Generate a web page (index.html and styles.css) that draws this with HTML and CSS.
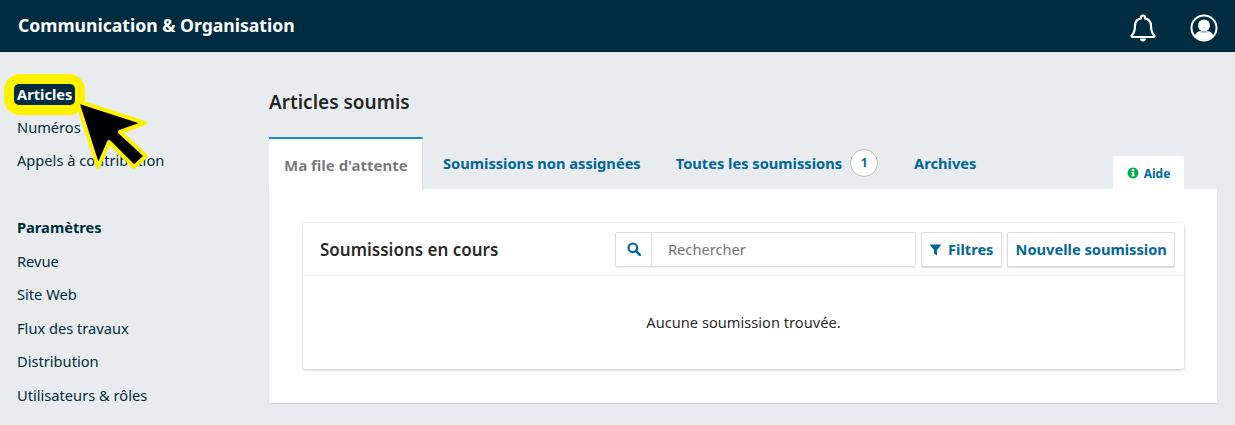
FILE: index.html
```html
<!DOCTYPE html>
<html lang="fr">
  <head>
    <meta charset="utf-8" />
    <title>Communication &amp; Organisation</title>
    <link rel="stylesheet" href="styles.css">
  </head>
  <body>
    <header class="topbar">
      <div class="brand">Communication &amp; Organisation</div>
      <div class="topbar-icons">
        <svg class="bell" viewBox="0 0 28 30" width="28" height="30">
          <path d="M14 2.500c-1.200 0-2 .9-2 2v.9C8 6.300 6 9.200 6 12.800c0 5.500-1.300 7.700-3.200 9.600-.6.600-.2 1.600.7 1.600h21c.9 0 1.300-1 .7-1.600-1.900-1.900-3.200-4.100-3.200-9.600 0-3.600-2-6.500-6-7.400v-.9c0-1.100-.8-2-2-2z" fill="none" stroke="#fff" stroke-width="2.200"/>
          <path d="M11 25.500h6c0 1.700-1.300 3-3 3s-3-1.300-3-3z" fill="#fff"/>
        </svg>
        <svg class="user" viewBox="0 0 28 28" width="28" height="28">
          <circle cx="14" cy="14" r="12.500" fill="#002c40" stroke="#fff" stroke-width="2"/>
          <circle cx="14" cy="11.500" r="6" fill="#fff"/>
          <path d="M4.800 21.500c1-3.200 4-4.500 6-4.500 1 .5 2 .8 3.200.8s2.200-.3 3.200-.8c2 0 5 1.300 6 4.500-2.200 2.900-5.500 4.500-9.200 4.500s-7-1.600-9.200-4.500z" fill="#fff"/>
          <path d="M9.500 17.500c1.300.9 2.900 1.300 4.500 1.300s3.200-.4 4.500-1.300" fill="none" stroke="#9fb0b8" stroke-width=".8"/>
        </svg>
      </div>
    </header>

    <div class="layout">
      <nav class="sidebar">
        <ul class="nav-group">
          <li class="nav-item"><span class="nav-current">Articles</span></li>
          <li class="nav-item">Numéros</li>
          <li class="nav-item">Appels à contribution</li>
        </ul>
        <div class="nav-heading">Paramètres</div>
        <ul class="nav-group">
          <li class="nav-item">Revue</li>
          <li class="nav-item">Site Web</li>
          <li class="nav-item">Flux des travaux</li>
          <li class="nav-item">Distribution</li>
          <li class="nav-item">Utilisateurs &amp; rôles</li>
        </ul>
      </nav>

      <main class="content">
        <h1 class="page-title">Articles soumis</h1>
        <div class="tabs">
          <div class="tab tab-active">Ma file d'attente</div>
          <div class="tab tab-second">Soumissions non assignées</div>
          <div class="tab tab-count">Toutes les soumissions <span class="badge">1</span></div>
          <div class="tab">Archives</div>
          <div class="help">
            <svg viewBox="0 0 12 12" width="12" height="12">
              <circle cx="6" cy="6" r="5.500" fill="#00b24e"/>
              <rect x="5" y="5" width="2.200" height="4" fill="#fff"/>
              <rect x="4.500" y="8.300" width="3.200" height="1" fill="#fff"/>
              <rect x="4.500" y="5" width="1.500" height="1" fill="#fff"/>
              <circle cx="6" cy="3.300" r="1.200" fill="#fff"/>
            </svg>
            Aide
          </div>
        </div>
        <section class="panel">
          <div class="card">
            <div class="card-head">
              <h2 class="card-title">Soumissions en cours</h2>
              <div class="search">
                <span class="search-icon">
                  <svg viewBox="0 0 14 14" width="14" height="14">
                    <circle cx="5.800" cy="5.800" r="4.300" fill="none" stroke="#006798" stroke-width="2.200"/>
                    <path d="M9 9l3.800 3.800" stroke="#006798" stroke-width="2.600" stroke-linecap="round"/>
                  </svg>
                </span>
                <span class="search-input">Rechercher</span>
              </div>
              <button class="btn btn-filter">
                <svg viewBox="0 0 13 13" width="13" height="13">
                  <path d="M.5 1.500h12L8 7v5.500L5 10.500V7z" fill="#006798"/>
                </svg>
                Filtres
              </button>
              <button class="btn btn-new">Nouvelle soumission</button>
            </div>
            <div class="card-empty">Aucune soumission trouvée.</div>
          </div>
        </section>
      </main>
    </div>

    <svg class="pointer" viewBox="0 0 160 180" width="160" height="180">
      <path d="M77 101L145 123 120 132 146 156 134 167 109 142 98 167z" fill="#000" stroke="#fff200" stroke-width="4" stroke-linejoin="round"/>
    </svg>
  </body>
</html>
```

FILE: styles.css
```css
* {
  box-sizing: border-box;
}

html,
body {
  height: 100%;
}

body {
  margin: 0;
  overflow: hidden;
  position: relative;
  background: #e9ecee;
  color: rgba(0, 0, 0, 0.87);
  font-family: "Noto Sans", sans-serif;
  font-size: 14.65px;
}

.topbar {
  height: 52px;
  background: #002c40;
  color: #fff;
  display: flex;
  align-items: center;
  justify-content: space-between;
  padding: 0 17px 0 18px;
  border-bottom: 1px solid #00222f;
}

.brand {
  font-size: 17.6px;
  font-weight: 700;
  padding-bottom: 1px;
}

.topbar-icons {
  display: flex;
  align-items: center;
  gap: 33px;
  padding-top: 4px;
}

.layout {
  display: flex;
}

.sidebar {
  width: 269px;
  flex: none;
  padding: 25px 0 0 17px;
  color: #002c40;
}

.nav-group {
  list-style: none;
  margin: 0 0 33.500px;
  padding: 0;
}

.nav-item,
.nav-heading {
  height: 33.500px;
  line-height: 33.500px;
  white-space: nowrap;
}

.nav-heading {
  font-weight: 700;
}

/* current page, with the yellow annotation ring behind it */
.nav-current {
  position: relative;
  z-index: 0;
  top: 1px;
  display: inline-block;
  height: 21px;
  line-height: 20px;
  margin-left: -3px;
  padding: 0 3px;
  background: #002c40;
  color: #fff;
  font-weight: 700;
  border-radius: 5px;
}

.nav-current::before {
  content: "";
  position: absolute;
  z-index: -2;
  left: -10px;
  right: -10px;
  top: -10px;
  bottom: -10px;
  background: #fff200;
  border-radius: 16px;
}

.nav-current::after {
  content: "";
  position: absolute;
  z-index: -1;
  left: 0;
  right: 0;
  top: 0;
  bottom: 0;
  background: #002c40;
  border-radius: 5px;
}

.content {
  flex: none;
  width: 948px;
}

.page-title {
  margin: 0;
  padding-top: 36px;
  height: 85px;
  font-size: 19px;
  line-height: 28px;
  font-weight: 600;
}

.tabs {
  display: flex;
  align-items: stretch;
  height: 52px;
  position: relative;
  color: #006798;
  font-weight: 700;
}

.tab {
  display: flex;
  align-items: center;
  padding: 0 17.500px 0 20px;
  margin-bottom: 1px;
  white-space: nowrap;
}

.tab-active {
  width: 154px;
  margin: 0 0 -1px;
  padding: 0 0 0 15px;
  background: #fff;
  color: rgba(0, 0, 0, 0.54);
  font-size: 15px;
  border-top: 2px solid #1e88c5;
  border-right: 1px solid #ddd;
}

.tab-second {
  padding-right: 15px;
}

.tab-count {
  gap: 8px;
  padding-right: 16px;
}

.badge {
  width: 28px;
  height: 28px;
  border-radius: 50%;
  background: #fff;
  border: 1px solid #bbb;
  color: #006798;
  font-size: 12px;
  display: flex;
  align-items: center;
  justify-content: center;
}

.help {
  position: absolute;
  right: 33px;
  bottom: 0;
  width: 71px;
  height: 33px;
  padding-top: 1px;
  background: #fff;
  border-radius: 2px 2px 0 0;
  font-size: 12px;
  display: flex;
  align-items: center;
  justify-content: center;
  gap: 5px;
}

.panel {
  height: 214px;
  background: #fff;
  padding: 34px 33px 0 34px;
  box-shadow: 0 1px 1px rgba(0, 0, 0, 0.1);
}

.card {
  height: 146px;
  border-radius: 2px;
  box-shadow: 0 0 2px rgba(0, 0, 0, 0.12), 0 1px 3px rgba(0, 0, 0, 0.2);
}

.card-head {
  height: 53px;
  display: flex;
  align-items: center;
  padding: 0 9px 0 17px;
  border-bottom: 1px solid #eee;
}

.card-title {
  margin: 0;
  font-size: 17px;
  font-weight: 600;
  flex: 1;
}

.search {
  width: 301px;
  height: 35px;
  margin-right: 5px;
  display: flex;
  border: 1px solid #ddd;
  border-radius: 2px;
  box-shadow: 0 1px 1px rgba(0, 0, 0, 0.08);
}

.search-icon {
  width: 36px;
  display: flex;
  align-items: center;
  justify-content: center;
  border-right: 1px solid #ddd;
}

.search-input {
  padding-left: 16px;
  line-height: 33px;
  color: #757575;
}

.btn {
  height: 35px;
  background: #fff;
  border: 1px solid #ddd;
  border-radius: 2px;
  box-shadow: 0 1px 1px rgba(0, 0, 0, 0.15);
  color: #006798;
  font-family: inherit;
  font-size: 14.65px;
  font-weight: 700;
  display: flex;
  align-items: center;
  white-space: nowrap;
}

.btn-filter {
  width: 81px;
  margin-right: 5px;
  padding: 0 0 0 7px;
  gap: 6px;
}

.btn-new {
  width: 168px;
  padding: 0 0 0 7.500px;
}

.card-empty {
  height: 92px;
  display: flex;
  align-items: center;
  justify-content: center;
}

/* annotation arrow drawn over the page */
.pointer {
  position: absolute;
  left: 0;
  top: 0;
}
```
